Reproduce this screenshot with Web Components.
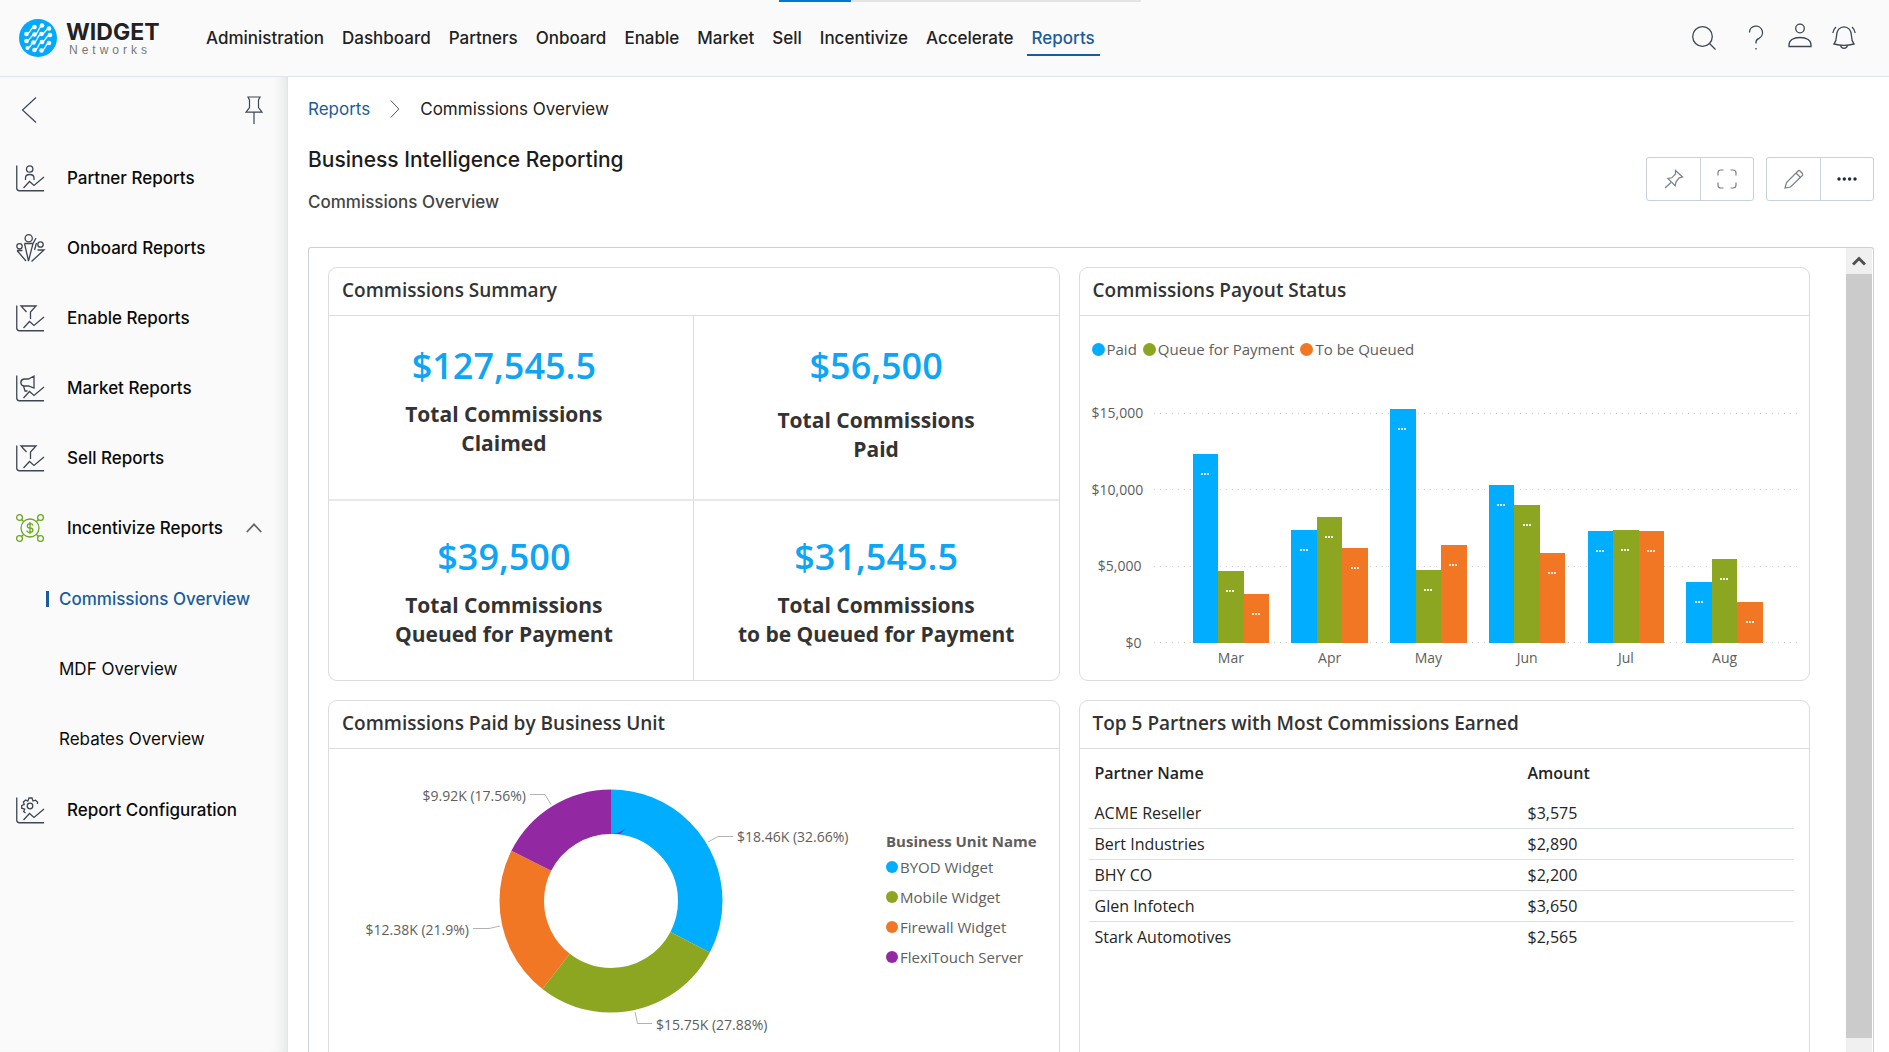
<!DOCTYPE html>
<html lang="en">
<head>
<meta charset="utf-8">
<title>Commissions Overview</title>
<style>
  html, body { margin: 0; height: 100%; }
  body { font: 400 17px/24px Inter, sans-serif; color: #222; background: #fff; overflow: hidden; }
  a { color: inherit; text-decoration: none; }
</style>
</head>
<body>
<portal-app>
  <portal-header slot="header">
    <nav-link>Administration</nav-link>
    <nav-link>Dashboard</nav-link>
    <nav-link>Partners</nav-link>
    <nav-link>Onboard</nav-link>
    <nav-link>Enable</nav-link>
    <nav-link>Market</nav-link>
    <nav-link>Sell</nav-link>
    <nav-link>Incentivize</nav-link>
    <nav-link>Accelerate</nav-link>
    <nav-link current>Reports</nav-link>
  </portal-header>
  <side-bar slot="side">
    <side-item icon="partner">Partner Reports</side-item>
    <side-item icon="onboard">Onboard Reports</side-item>
    <side-item icon="funnel">Enable Reports</side-item>
    <side-item icon="market">Market Reports</side-item>
    <side-item icon="funnel">Sell Reports</side-item>
    <side-item icon="incentive" open>Incentivize Reports
      <side-subitem slot="sub" current>Commissions Overview</side-subitem>
      <side-subitem slot="sub">MDF Overview</side-subitem>
      <side-subitem slot="sub">Rebates Overview</side-subitem>
    </side-item>
    <side-item icon="config">Report Configuration</side-item>
  </side-bar>
  <page-heading></page-heading>
  <report-frame>
    <report-card heading="Commissions Summary">
      <kpi-grid>
        <kpi-tile value="$127,545.5">Total Commissions<br>Claimed</kpi-tile>
        <kpi-tile value="$56,500" spacing="loose">Total Commissions<br>Paid</kpi-tile>
        <kpi-tile value="$39,500">Total Commissions<br>Queued for Payment</kpi-tile>
        <kpi-tile value="$31,545.5">Total Commissions<br>to be Queued for Payment</kpi-tile>
      </kpi-grid>
    </report-card>
    <report-card heading="Commissions Payout Status"><payout-chart></payout-chart></report-card>
    <report-card heading="Commissions Paid by Business Unit"><unit-chart></unit-chart></report-card>
    <report-card heading="Top 5 Partners with Most Commissions Earned"><partner-table></partner-table></report-card>
  </report-frame>
</portal-app>

<script>
const define = (name, html, setup) => {
  const template = document.createElement('template');
  template.innerHTML = `<style>*{box-sizing:border-box}a{color:inherit;text-decoration:none}button{font:inherit;color:inherit;background:none;border:0;padding:0;margin:0;cursor:pointer}</style>` + html;
  customElements.define(name, class extends HTMLElement {
    connectedCallback() {
      if (this.shadowRoot) return;
      const root = this.attachShadow({ mode: 'open' });
      root.append(template.content.cloneNode(true));
      if (setup) setup.call(this, root);
    }
  });
};

const axes = 'M.75 .5V23q0 2.75 2.75 2.75H28';
const trend = 'M7.5 23l6-6.5 4.5 4L28 12';
const ICONS = {
  search: [24, 24, '<circle cx="10.5" cy="10.5" r="9.8"/><path d="M17.5 17.5l6 6"/>'],
  help: [24, 24, '<path d="M5.5 6.5a6.5 6.5 0 1 1 9.5 5.8q-3 1.400-3 3.700v1.500"/><path d="M12 22v1.500"/>'],
  user: [24, 24, '<circle cx="12" cy="2.500" r="4.300"/><path d="M1 20.500v-1.500c0-4.500 4-7.500 11-7.500s11 3 11 7.500v1.500z"/>'],
  bell: [24, 24, '<path d="M2 18q2.500-3 2.500-8c0-6 3.500-9.200 7.500-9.200s7.500 3.200 7.500 9.200q0 5 2.500 8c-6 1.600-14 1.600-20 0z"/><path d="M8.500 19.300a3.600 3.900 0 0 0 7 0M4 1Q1.200 3.500.8 7M20 1q2.800 2.500 3.200 6"/>'],
  back: [16, 28, '<path d="M15 1.500L1.500 14 15 26.500"/>'],
  pin: [18, 28, '<path d="M3 1h12l-1.500 3v7.500l3.500 4.700H1l3.500-4.700V4zM9 16.500V28"/>'],
  sep: [10, 18, '<path d="M.8 .5l8 8.500-8 8.500"/>'],
  up: [16, 10, '<path d="M.8 9L8 1.300 15.200 9"/>'],
  tack: [20, 20, '<path d="M11.500 1.500l7 6.500-3.300.8-3.200 4-.8 4L3.800 9.500l4-.7 3.700-3.800z"/><path d="M7 13.500l-6 5.500"/>'],
  expand: [20, 20, '<path d="M1 6.500V4q0-3 3-3h2.500M13.500 1H16q3 0 3 3v2.500M19 13.500V16q0 3-3 3h-2.500M6.500 19H4q-3 0-3-3v-2.500"/>'],
  edit: [20, 20, '<path d="M1 19l1.500-5.500L14 2q1-1 2 0l2.500 2.500q.8 1-.2 2L6.500 18zM12 4l4.500 4.500"/>'],
  more: [20, 20, '<g fill="currentColor" stroke="none"><circle cx="2" cy="10" r="1.700"/><circle cx="7.300" cy="10" r="1.700"/><circle cx="12.600" cy="10" r="1.700"/><circle cx="18" cy="10" r="1.700"/></g>'],
  partner: [28, 27, `<path d="${axes}"/><path d="${trend}"/><circle cx="13.700" cy="4" r="3.200"/><path d="M9.500 15v-2q0-3.500 4.200-3.500T18 13v2"/>`],
  funnel: [28, 27, `<path d="${axes}"/><path d="${trend}"/><path d="M10.500 7L5 1h15l-5.500 6v7"/>`],
  market: [28, 27, `<path d="${axes}"/><path d="${trend}"/><path d="M18 1v12l-5.500-2H8q-3.200-.5-3.200-3.500T8 4h4.500zM7.500 11l1.500 5h2.500"/>`],
  config: [28, 27, `<path d="${axes}"/><path d="${trend}"/><circle cx="14" cy="9" r="2.800"/><path d="M9.500 16l-1.800-1.500 1-2.300-3-1V8.500l2.500-1-.8-2.500L9.500 3l2.300 1.200L13 1h3l1 3 2.500-.8L21.500 5v2"/>`],
  onboard: [28, 28, '<circle cx="12.700" cy="4.200" r="3.600"/><circle cx="3.500" cy="12.300" r="2.700"/><circle cx="24.500" cy="10.500" r="2.700"/><path d="M8.500 9.500h8.500l3-5.500M8.500 9.500L12.500 27l4.500-17.500M1 16.500h5.500M1 16.500l9 10.500M21.500 16H28L15.500 27.500M20.500 9l-2 7"/>'],
  incentive: [28, 28, '<circle cx="14" cy="14" r="9"/><circle cx="3.500" cy="3.500" r="2.900"/><circle cx="24.500" cy="3.500" r="2.900"/><circle cx="3.500" cy="24.500" r="2.900"/><circle cx="24.500" cy="24.500" r="2.900"/><path d="M5.500 5.500l2 2M22.500 5.500l-2 2M5.500 22.500l2-2M22.500 22.500l-2-2M17 11.500q-.5-1.800-3-1.800t-2.700 2.100 2.700 2.200 2.900 2.200-2.900 2.200-3.200-1.900M14 8v12"/>'],
};

define('line-icon', `<style>
  :host { display: inline-flex; flex: none; }
  svg { display: block; overflow: visible; fill: none; stroke: currentColor; stroke-width: var(--stroke, 1.300); }
</style>`, function (root) {
  const [w, h, body] = ICONS[this.getAttribute('name')];
  root.innerHTML += `<svg width="${w}" height="${h}" viewBox="0 0 ${w} ${h}" aria-hidden="true">${body}</svg>`;
});

define('portal-app', `<style>
  :host { display: flex; flex-direction: column; height: 100vh; }
  .body { display: flex; flex: 1; min-height: 0; }
  main { flex: 1; min-width: 0; display: flex; flex-direction: column; padding: 0 15px 0 20px; }
</style>
<slot name="header"></slot>
<div class="body"><slot name="side"></slot><main><slot></slot></main></div>`);

define('portal-header', `<style>
  :host { display: block; position: relative; background: #fafafa; border-bottom: 1px solid #dfe5ec; }
  header { display: flex; align-items: center; height: 76px; padding: 0 33px 0 19px; }
  .brand { display: flex; align-items: center; gap: 9px; width: 182px; }
  .word { display: grid; }
  .word b { font: 700 23px/24px Inter, sans-serif; color: #222; }
  .word span { font: 400 12px/12px "Liberation Sans", sans-serif; letter-spacing: 4px; color: #777; padding-left: 3px; }
  nav { display: flex; gap: 8px; flex: 1; }
  .tools { display: flex; align-items: center; gap: 20px; color: #3d4652; }
  .tools button { display: flex; }
  .tools button:first-child { margin-right: 8px; }
  .progress { position: absolute; top: 0; left: 779px; width: 362px; height: 2px; background: #e3e3e3; }
  .progress i { display: block; width: 20%; height: 2px; background: #0078d4; }
</style>
<div class="progress"><i></i></div>
<header>
  <a class="brand" href="#">
    <svg width="38" height="38" viewBox="0 0 38 38" aria-hidden="true"><circle cx="19" cy="19" r="19" fill="#0af"/>
      <g stroke="#fff" stroke-width="1.300" fill="none"><path d="M7.500 15c4 0 4-7 8-7M7.500 22c4 0 4-6.500 8-6.500s4-8.500 7.500-8.500M14.500 23.500c4 0 4-8.500 8-8.500s4-5.500 7.500-5.500M8.500 29c4 0 3-5.500 6-5.500M15.500 31c4 0 4-8 7.500-8s4-7 8-7M22.500 31.500c4 0 4-7.500 7.500-7.500"/></g>
      <g fill="#fff"><circle cx="15.500" cy="8" r="2.300"/><circle cx="23" cy="6.500" r="2.300"/><circle cx="7.500" cy="15" r="2.300"/><circle cx="15.500" cy="15.500" r="2.300"/><circle cx="22.500" cy="15" r="2.300"/><circle cx="30" cy="9.500" r="2.300"/><circle cx="7.500" cy="22" r="2.300"/><circle cx="14.500" cy="23.500" r="2.300"/><circle cx="23" cy="23" r="2.300"/><circle cx="31" cy="16" r="2.300"/><circle cx="8.500" cy="29" r="2"/><circle cx="15.500" cy="31" r="2.300"/><circle cx="22.500" cy="31.500" r="2.300"/><circle cx="30" cy="24" r="2.300"/></g></svg>
    <span class="word"><b>WIDGET</b><span>Networks</span></span>
  </a>
  <nav aria-label="Main"><slot></slot></nav>
  <div class="tools">
    <button aria-label="Search"><line-icon name="search"></line-icon></button>
    <button aria-label="Help"><line-icon name="help"></line-icon></button>
    <button aria-label="Account"><line-icon name="user"></line-icon></button>
    <button aria-label="Notifications"><line-icon name="bell"></line-icon></button>
  </div>
</header>`);

define('nav-link', `<style>
  :host { display: block; font-weight: 500; color: #222; }
  a { display: block; padding: 6px 5px 4px; border-bottom: 2px solid transparent; }
  :host([current]) a { color: #1a5c9e; border-color: #1a5c9e; }
</style><a href="#"><slot></slot></a>`);

define('side-bar', `<style>
  :host { display: block; box-sizing: border-box; flex: none; width: 288px; background: #fafafa; border-right: 1px solid #dfe5ec; box-shadow: inset -12px 0 12px -8px rgba(40,50,60,.1); }
  .top { display: flex; justify-content: space-between; align-items: center; height: 66px; padding: 0 24px 0 21px; color: #3d4652; --stroke: 1.200; }
  .top button { display: flex; }
</style>
<div class="top"><button aria-label="Back"><line-icon name="back"></line-icon></button><button aria-label="Pin menu"><line-icon name="pin"></line-icon></button></div>
<nav aria-label="Reports"><slot></slot></nav>`);

define('side-item', `<style>
  :host { display: block; font-weight: 500; color: #0b0b0b; }
  .row { display: flex; align-items: center; width: 100%; height: 70px; padding: 0 25px 0 16px; text-align: left; }
  .row > line-icon:first-child { width: 51px; color: #3d4652; }
  :host([open]) .row > line-icon:first-child { color: #6aa81e; }
  .label { flex: 1; white-space: nowrap; }
  .caret { display: none; color: #666; --stroke: 1.800; }
  :host([open]) .caret { display: inline-flex; }
  .sub { display: none; padding: 1px 0; }
  :host([open]) .sub { display: block; }
</style>
<div class="entry"></div><div class="sub"><slot name="sub"></slot></div>`, function (root) {
  const open = this.hasAttribute('open');
  const tag = open ? 'button aria-expanded="true"' : 'a href="#"';
  root.querySelector('.entry').innerHTML = `<${tag} class="row"><line-icon name="${this.getAttribute('icon')}"></line-icon><span class="label"><slot></slot></span>${open ? '<line-icon class="caret" name="up"></line-icon>' : ''}</${tag.split(' ')[0]}>`;
});

define('side-subitem', `<style>
  :host { display: block; font-weight: 400; color: #0b0b0b; }
  a { display: flex; align-items: center; gap: 10px; height: 70px; padding-left: 46px; }
  i { width: 3px; height: 16px; }
  :host([current]) { color: #1a5c9e; font-weight: 500; }
  :host([current]) i { background: #1a5c9e; }
</style><a href="#"><i></i><slot></slot></a>`);

define('page-heading', `<style>
  :host { display: block; }
  .crumbs { display: flex; align-items: center; padding-top: 20px; }
  .crumbs a { color: #1a5c9e; }
  .crumbs line-icon { padding: 0 20px; color: #555; --stroke: 1; }
  .bar { display: flex; justify-content: space-between; padding-top: 25px; height: 126px; }
  h1 { margin: 0; font: 500 21px/28px Inter, sans-serif; color: #1c1c1c; }
  h2 { margin: 16px 0 0; font: 500 17px/24px Inter, sans-serif; color: #444; }
  .tools { display: flex; gap: 12px; padding-top: 11px; }
  .group { display: flex; height: 44px; border: 1px solid #c9d1da; border-radius: 3px; color: #78808a; --stroke: 1.200; }
  .group button { display: grid; place-items: center; width: 53px; }
  .group button + button { border-left: 1px solid #c9d1da; }
  .dark { color: #23282f; }
</style>
<nav class="crumbs" aria-label="Breadcrumb"><a href="#">Reports</a><line-icon name="sep"></line-icon><span>Commissions Overview</span></nav>
<div class="bar">
  <div><h1>Business Intelligence Reporting</h1><h2>Commissions Overview</h2></div>
  <div class="tools">
    <div class="group"><button aria-label="Pin report"><line-icon name="tack"></line-icon></button><button aria-label="Full screen"><line-icon name="expand"></line-icon></button></div>
    <div class="group"><button aria-label="Edit"><line-icon name="edit"></line-icon></button><button aria-label="More" class="dark"><line-icon name="more"></line-icon></button></div>
  </div>
</div>`);

define('report-frame', `<style>
  :host { display: flex; flex: 1; min-height: 0; border: 1px solid #c9d1da; border-bottom: 0; border-radius: 3px 3px 0 0; font-family: "Open Sans", sans-serif; }
  .view { flex: 1; min-width: 0; overflow: hidden; }
  .grid { display: grid; grid-template-columns: 1fr 1fr; grid-template-rows: 414px 414px; gap: 19px; padding: 19px 36px 19px 19px; }
  .scroll { flex: none; width: 26px; display: flex; flex-direction: column; background: #f0f0f0; margin-right: 1px; }
  .scroll button { height: 26px; display: grid; place-items: center; color: #505050; }
  .thumb { flex: 1; background: #cbcbcb; margin-bottom: 14px; }
</style>
<div class="view"><div class="grid"><slot></slot></div></div>
<div class="scroll"><button aria-label="Scroll up"><svg width="14" height="10" viewBox="0 0 14 10" aria-hidden="true"><path d="M1 8.500l6-6 6 6" fill="none" stroke="currentColor" stroke-width="3"/></svg></button><div class="thumb"></div></div>`);

define('report-card', `<style>
  :host { display: flex; flex-direction: column; min-width: 0; border: 1px solid #dcdcdc; border-radius: 9px; }
  h3 { margin: 0; padding: 7px 13px 10px; font: 600 19px/30px "Open Sans", sans-serif; color: #333; border-bottom: 1px solid #dcdcdc; white-space: nowrap; }
  ::slotted(*) { flex: 1; min-height: 0; }
</style><h3></h3><slot></slot>`, function (root) {
  root.querySelector('h3').textContent = this.getAttribute('heading');
});

define('kpi-grid', `<style>
  :host { display: grid; grid-template-columns: 1fr 1fr; grid-template-rows: 183px 1fr; }
  ::slotted(*) { padding-top: 22px; }
  ::slotted(:nth-child(odd)) { border-right: 1px solid #dcdcdc; padding-right: 14px; }
  ::slotted(:nth-child(n+3)) { border-top: 2px solid #e9e9e9; padding-top: 28px; }
</style><slot></slot>`);

define('kpi-tile', `<style>
  :host { display: flex; flex-direction: column; align-items: center; text-align: center; }
  .value { font-weight: 600; font-size: 36px; line-height: 56px; color: #0ea5f5; }
  .label { font-weight: 700; font-size: 21px; line-height: 29px; color: #333; padding-top: 6px; }
  :host([spacing="loose"]) .label { padding-top: 12px; }
</style><span class="value"></span><span class="label"><slot></slot></span>`, function (root) {
  root.querySelector('.value').textContent = this.getAttribute('value');
});

const BLUE = '#00adff', GREEN = '#8ca622', ORANGE = '#f27724', PURPLE = '#9229a3';

define('payout-chart', `<style>
  :host { display: flex; flex-direction: column; color: #605e5c; padding: 22px 9px 17px 12px; }
  ul { display: flex; gap: 6px; margin: 0; padding: 0; list-style: none; font-size: 15px; line-height: 22px; }
  li { display: flex; align-items: center; gap: 2px; }
  li i { width: 13px; height: 13px; border-radius: 50%; }
  .plot { display: grid; grid-template-columns: 50px 1fr; column-gap: 12px; flex: 1; padding-top: 31px; font-size: 14px; line-height: 20px; }
  .scale { display: flex; flex-direction: column; justify-content: space-between; text-align: right; margin: 12px 0 10px; }
  .area { display: grid; margin: 22px 0 20px; }
  .area > * { grid-area: 1 / 1; }
  .lines { display: flex; flex-direction: column; justify-content: space-between; }
  .lines i { height: 1px; background: repeating-linear-gradient(90deg, #d0d0d0 0 1px, transparent 1px 6px); }
  .groups { display: flex; padding: 0 26px 0 28px; }
  .group { flex: 1; display: flex; align-items: flex-end; padding: 0 11px; position: relative; }
  .group span { position: absolute; top: 100%; left: 0; right: 0; text-align: center; padding-top: 5px; }
  .bar { flex: 1; padding-top: 19px; }
  .bar::before { content: ""; display: block; width: 9px; height: 2px; margin: 0 auto; background: repeating-linear-gradient(90deg, #fff 0 2px, transparent 2px 3px); opacity: .85; }
</style>
<ul><li><i style="background:${BLUE}"></i>Paid</li><li><i style="background:${GREEN}"></i>Queue for Payment</li><li><i style="background:${ORANGE}"></i>To be Queued</li></ul>
<div class="plot">
  <div class="scale"><span>$15,000</span><span>$10,000</span><span>$5,000</span><span>$0</span></div>
  <div class="area"><div class="lines"><i></i><i></i><i></i><i></i></div><div class="groups"></div></div>
</div>`, function (root) {
  const data = [['Mar', 12320, 4720, 3220], ['Apr', 7400, 8240, 6210], ['May', 15230, 4770, 6370], ['Jun', 10320, 9010, 5890], ['Jul', 7320, 7370, 7280], ['Aug', 4010, 5490, 2660]];
  root.querySelector('.groups').innerHTML = data.map(([month, ...values]) =>
    `<div class="group">${values.map((v, i) => `<div class="bar" style="height:${v / 150}%;background:${[BLUE, GREEN, ORANGE][i]}"></div>`).join('')}<span>${month}</span></div>`).join('');
});

define('unit-chart', `<style>
  :host { display: flex; color: #605e5c; }
  svg { flex: none; font: 400 14px "Open Sans", sans-serif; fill: #605e5c; overflow: visible; }
  .leader { fill: none; stroke: #b3b3b3; }
  .legend { padding: 81px 0 0 17px; font-size: 15px; line-height: 22px; }
  h4 { margin: 0; font: 700 15px/22px "Open Sans", sans-serif; white-space: nowrap; }
  ul { margin: 0; padding: 0; list-style: none; }
  li { display: flex; align-items: center; gap: 2px; height: 30px; }
  li i { width: 12px; height: 12px; border-radius: 50%; }
</style>
<svg width="540" height="303" viewBox="329 749 540 303" role="img" aria-label="Commissions paid by business unit">
  <g class="ring" fill="none" stroke-width="44.500" transform="rotate(-90 611 901)"></g>
  <g class="leader"><path d="M530 794.500h15l6 10M473 928.500h16l11-2.500M708 842l10-5.500h15M635 1012l2.500 11.500h14.500"/></g>
  <text x="526" y="801" text-anchor="end">$9.92K (17.56%)</text>
  <text x="469" y="935" text-anchor="end">$12.38K (21.9%)</text>
  <text x="737" y="842">$18.46K (32.66%)</text>
  <text x="656" y="1030">$15.75K (27.88%)</text>
</svg>
<div class="legend"><h4>Business Unit Name</h4><ul>
  <li><i style="background:${BLUE}"></i>BYOD Widget</li><li><i style="background:${GREEN}"></i>Mobile Widget</li><li><i style="background:${ORANGE}"></i>Firewall Widget</li><li><i style="background:${PURPLE}"></i>FlexiTouch Server</li></ul></div>`, function (root) {
  let start = 0;
  root.querySelector('.ring').innerHTML = [[32.66, BLUE], [27.88, GREEN], [21.9, ORANGE], [17.56, PURPLE]].map(([share, color]) => {
    const arc = `<circle cx="611" cy="901" r="89.25" pathLength="100" stroke="${color}" stroke-dasharray="${share} ${100 - share}" stroke-dashoffset="${-start}"/>`;
    start += share;
    return arc;
  }).join('');
});

define('partner-table', `<style>
  :host { display: block; padding: 9px 15px 0 9px; }
  table { width: 100%; border-collapse: collapse; font-size: 16px; line-height: 22px; color: #252423; }
  th, td { text-align: left; padding: 4px 6px; font-weight: 400; }
  th { font-weight: 600; padding: 4px 6px 14px; }
  th:first-child { width: 433px; }
  tr + tr td { border-top: 1px solid #dcdfe3; }
</style>
<table><thead><tr><th>Partner Name</th><th>Amount</th></tr></thead><tbody>
<tr><td>ACME Reseller</td><td>$3,575</td></tr>
<tr><td>Bert Industries</td><td>$2,890</td></tr>
<tr><td>BHY CO</td><td>$2,200</td></tr>
<tr><td>Glen Infotech</td><td>$3,650</td></tr>
<tr><td>Stark Automotives</td><td>$2,565</td></tr>
</tbody></table>`);
</script>
</body>
</html>
